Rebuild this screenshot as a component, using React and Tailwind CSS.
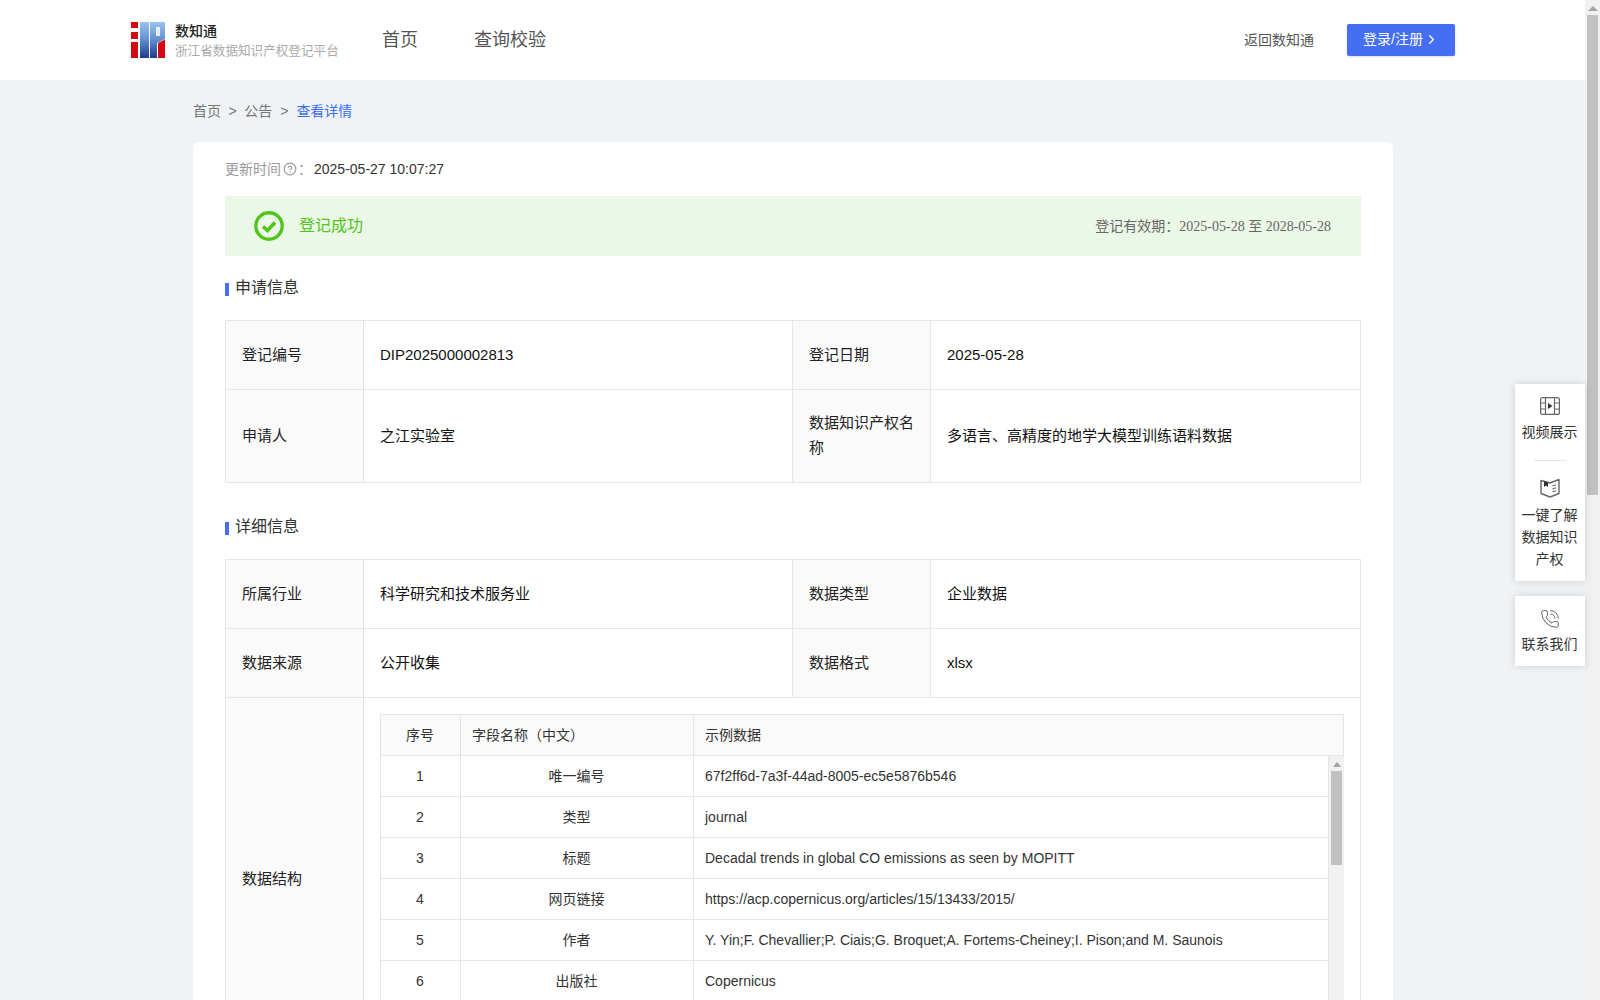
import React from 'react'
import { ChevronRight, CircleHelp, PhoneCall } from 'lucide-react'

const fields = [
  { no: 1, name: '唯一编号', sample: '67f2ff6d-7a3f-44ad-8005-ec5e5876b546' },
  { no: 2, name: '类型', sample: 'journal' },
  { no: 3, name: '标题', sample: 'Decadal trends in global CO emissions as seen by MOPITT' },
  { no: 4, name: '网页链接', sample: 'https://acp.copernicus.org/articles/15/13433/2015/' },
  { no: 5, name: '作者', sample: 'Y. Yin;F. Chevallier;P. Ciais;G. Broquet;A. Fortems-Cheiney;I. Pison;and M. Saunois' },
  { no: 6, name: '出版社', sample: 'Copernicus' }
]

const Logo = () => (
  <svg width="34" height="36" viewBox="0 0 34 36" className="shrink-0">
    <defs>
      <linearGradient id="logoBlue" x1="0" y1="0" x2="0" y2="1">
        <stop offset="0" stopColor="#9cc3ee" />
        <stop offset="0.5" stopColor="#5f8ed0" />
        <stop offset="1" stopColor="#1d3a8c" />
      </linearGradient>
    </defs>
    <rect x="0" y="0" width="7" height="36" fill="#d40a12" />
    <rect x="0" y="6" width="7" height="4" fill="#fff" />
    <rect x="0" y="17" width="7" height="3" fill="#fff" />
    <rect x="9" y="0" width="9" height="36" fill="url(#logoBlue)" />
    <path d="M19 0H34V17L26 21V36H19Z" fill="url(#logoBlue)" />
    <rect x="25" y="5" width="4" height="9" fill="#e6eff9" />
    <path d="M27 21L34 17.5V36H27Z" fill="#d40a12" />
  </svg>
)

const FilmIcon = () => (
  <svg width="20" height="18" viewBox="0 0 20 18" fill="none" stroke="#666" strokeWidth="1.2">
    <rect x="0.6" y="0.6" width="18.8" height="16.8" rx="2" />
    <path d="M5.5 0.6V17.4M14.5 0.6V17.4M0.6 6H5.5M0.6 12H5.5M14.5 6H19.4M14.5 12H19.4" />
    <path d="M8 6L12.5 9L8 12Z" fill="#333" stroke="none" />
  </svg>
)

const BookIcon = () => (
  <svg width="20" height="20" viewBox="0 0 20 20" fill="none" stroke="#666" strokeWidth="1.4">
    <path d="M1 2.5L10 5L19 1.5V15.5L10 19L1 15.5Z" strokeLinejoin="round" />
    <path d="M4 3.2V9L6 7.5L8 9V4.2Z" fill="#333" stroke="none" />
    <path d="M12.5 8L16 6.8M12.5 11L16 9.8M12.5 14L16 12.8" strokeWidth="1.1" />
  </svg>
)

const SectionTitle = ({ children, className }) => (
  <div className={`flex items-center h-6 ${className}`}>
    <span className="w-1 h-[13px] mt-[3px] bg-[#4570f0]"></span>
    <span className="ml-[6px] text-[16px] text-[#333]">{children}</span>
  </div>
)

const Label = ({ children, className = '' }) => (
  <td className={`border border-[#e6e6e6] bg-[#fafafa] px-4 pb-[2px] leading-[25px] text-[#222] ${className}`}>{children}</td>
)

const Value = ({ children, colSpan }) => (
  <td colSpan={colSpan} className="border border-[#e6e6e6] px-4 pb-[2px] leading-[25px] text-[#111]">{children}</td>
)

const InfoTable = ({ children }) => (
  <table className="w-[1136px] table-fixed border-collapse text-[15px]">
    <colgroup>
      <col className="w-[138px]" />
      <col className="w-[429px]" />
      <col className="w-[138px]" />
      <col />
    </colgroup>
    <tbody>{children}</tbody>
  </table>
)

const FieldTable = () => (
  <div className="border border-[#e6e6e6] text-[14px] text-[#333]">
    <div className="flex h-[41px] bg-[#fafafa] border-b border-[#e6e6e6] items-center">
      <div className="w-[80px] h-full border-r border-[#e6e6e6] flex items-center justify-center pr-px">序号</div>
      <div className="w-[233px] h-full border-r border-[#e6e6e6] flex items-center pl-[11px]">字段名称（中文）</div>
      <div className="flex-1 pl-[11px]">示例数据</div>
    </div>
    <div className="flex h-[287px] -mr-px overflow-hidden">
      <div className="flex-1 border-r border-[#e6e6e6]">
        {fields.map((f) => (
          <div key={f.no} className="flex h-[41px] border-b border-[#e6e6e6] items-center">
            <div className="w-[80px] h-full border-r border-[#e6e6e6] flex items-center justify-center pr-px">{f.no}</div>
            <div className="w-[233px] h-full border-r border-[#e6e6e6] flex items-center justify-center pr-px">{f.name}</div>
            <div className="flex-1 pl-[11px]">{f.sample}</div>
          </div>
        ))}
      </div>
      <div className="w-[15px] bg-[#f1f1f1] flex flex-col items-center pt-[6px]">
        <span className="w-0 h-0 border-x-[4px] border-x-transparent border-b-[5px] border-b-[#a3a3a3]"></span>
        <span className="w-[11px] h-[94px] mt-1 bg-[#c1c1c1]"></span>
      </div>
    </div>
  </div>
)

const App = () => {
  return (
    <div className="relative flex h-[1000px] overflow-hidden bg-[#eff3f6] font-['Liberation_Sans','Noto_Sans_CJK_SC',sans-serif]">
      <div className="flex-1 min-w-0">
        {/* Header */}
        <header className="h-20 bg-white flex items-center pl-[131px] pr-[130px]">
          <Logo />
          <div className="ml-[10px] w-[207px] pt-px">
            <div className="text-[14px] leading-5 font-medium text-[#222]">数知通</div>
            <div className="text-[12.6px] leading-5 text-[#aaa] whitespace-nowrap">浙江省数据知识产权登记平台</div>
          </div>
          <nav className="flex gap-[56px] text-[18px] text-[#555]">
            <span>首页</span>
            <span>查询校验</span>
          </nav>
          <span className="ml-auto text-[14px] text-[#555]">返回数知通</span>
          <button className="ml-[33px] w-[108px] h-8 rounded-[2px] bg-[#466ef5] text-white text-[14px] flex items-center pl-4 pb-px shadow-sm">
            登录/注册
            <ChevronRight size={15} className="ml-px" />
          </button>
        </header>

        <main className="ml-[193px] w-[1200px]">
          {/* Breadcrumb */}
          <div className="h-[62px] flex items-center text-[14px] text-[#777]">
            <span>首页</span>
            <span className="mx-[7.5px]">&gt;</span>
            <span>公告</span>
            <span className="mx-2">&gt;</span>
            <span className="text-[#3b6cf6]">查看详情</span>
          </div>

          <div className="bg-white rounded-md px-8 pt-4">
            <div className="flex items-center h-[22px] text-[14px] text-[#999]">
              <span>更新时间</span>
              <CircleHelp size={14} className="ml-[2px]" />
              <span className="w-[17px] pl-px">：</span>
              <span className="text-[#333]">2025-05-27 10:07:27</span>
            </div>

            <div className="mt-4 h-[60px] bg-[#ebf7e7] flex items-center pl-[29px] pr-[30px]">
              <svg width="30" height="30" viewBox="0 0 30 30" fill="none" stroke="#52c41a" strokeWidth="3.4">
                <circle cx="15" cy="15" r="13.2" />
                <path d="M9 15.5L13.5 19.5L21 11.5" strokeWidth="3.6" />
              </svg>
              <span className="ml-[15px] text-[16px] text-[#52c41a]">登记成功</span>
              <span className="ml-auto text-[14px] text-[#666]">
                登记有效期：<span className="font-['Liberation_Serif','Noto_Sans_CJK_SC',serif]">2025-05-28 至 2028-05-28</span>
              </span>
            </div>

            <SectionTitle className="mt-5 mb-5">申请信息</SectionTitle>
            <InfoTable>
              <tr className="h-[69px]">
                <Label>登记编号</Label>
                <Value>DIP2025000002813</Value>
                <Label>登记日期</Label>
                <Value>2025-05-28</Value>
              </tr>
              <tr className="h-[93px]">
                <Label>申请人</Label>
                <Value>之江实验室</Value>
                <Label>数据知识产权名称</Label>
                <Value>多语言、高精度的地学大模型训练语料数据</Value>
              </tr>
            </InfoTable>

            <SectionTitle className="mt-8 mb-5">详细信息</SectionTitle>
            <InfoTable>
              <tr className="h-[69px]">
                <Label>所属行业</Label>
                <Value>科学研究和技术服务业</Value>
                <Label>数据类型</Label>
                <Value>企业数据</Value>
              </tr>
              <tr className="h-[69px]">
                <Label>数据来源</Label>
                <Value>公开收集</Value>
                <Label>数据格式</Label>
                <Value>xlsx</Value>
              </tr>
              <tr>
                <Label>数据结构</Label>
                <td colSpan={3} className="border border-[#e6e6e6] p-4">
                  <FieldTable />
                </td>
              </tr>
            </InfoTable>
          </div>
        </main>
      </div>

      {/* Page scrollbar */}
      <div className="w-[15px] bg-[#f1f1f1] flex flex-col items-center pt-[6px]">
        <span className="w-0 h-0 border-x-[5px] border-x-transparent border-b-[5px] border-b-[#a3a3a3]"></span>
        <span className="w-[11px] h-[480px] mt-1 bg-[#c1c1c1]"></span>
      </div>

      {/* Floating side panel */}
      <div className="absolute right-[15px] top-[384px] w-[70px] flex flex-col gap-[15px] text-[14px] leading-[22px] text-[#333] text-center">
        <div className="h-[197px] pr-px bg-white shadow-[0_0_8px_rgba(0,0,0,0.15)] flex flex-col items-center pt-[13px]">
          <FilmIcon />
          <div className="mt-[6px]">视频展示</div>
          <div className="w-8 h-px bg-[#e4e4e4] mt-[17px]"></div>
          <div className="mt-[17px]"><BookIcon /></div>
          <div className="mt-[6px] w-[58px]">一键了解数据知识产权</div>
        </div>
        <div className="h-[70px] pr-px bg-white shadow-[0_0_8px_rgba(0,0,0,0.15)] flex flex-col items-center pt-[13px]">
          <PhoneCall size={20} strokeWidth={1.1} color="#555" />
          <div className="mt-1">联系我们</div>
        </div>
      </div>
    </div>
  )
}

export default App
